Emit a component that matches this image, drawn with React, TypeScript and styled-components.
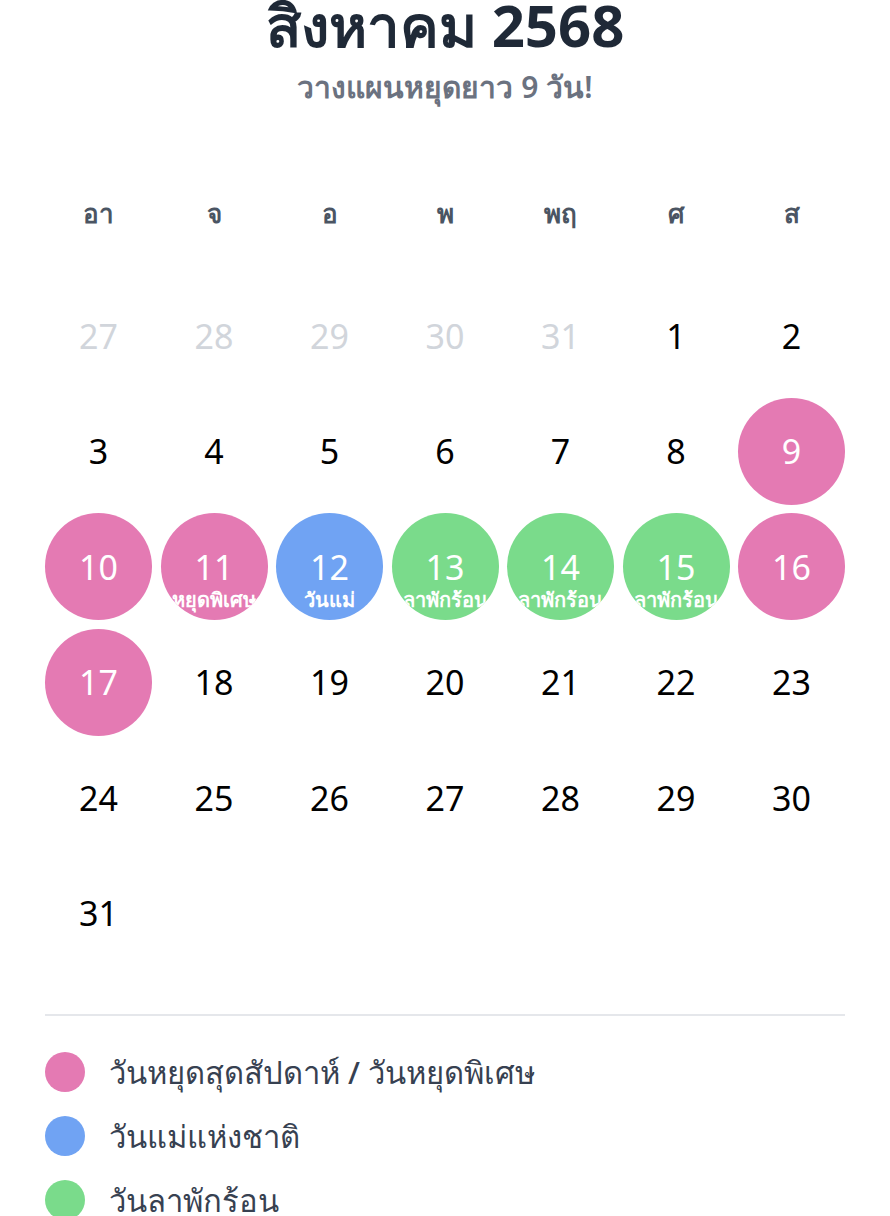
import React from 'react';
import styled, { createGlobalStyle } from 'styled-components';

const GlobalStyle = createGlobalStyle`
    body {
        margin: 0;
        background: #ffffff;
        font-family: 'Noto Sans', 'Open Sans', sans-serif;
    }
`;

const Side = styled.div`
    width: 800px;
    margin: 0 auto;
    padding: 0 0 40px 0;
`;

const Tittel = styled.h1`
    margin: -12px 0 0 0;
    text-align: center;
    font-size: 58px;
    line-height: 74px;
    font-weight: 700;
    color: #1f2937;
`;

const Undertittel = styled.p`
    margin: 6px 0 0 0;
    text-align: center;
    font-size: 30px;
    line-height: 38px;
    font-weight: 600;
    color: #6b7280;
`;

const Rutenett = styled.div`
    display: grid;
    grid-template-columns: repeat(7, 107px);
    column-gap: 8.5px;
    row-gap: 8.5px;
`;

const Ukedager = styled(Rutenett)`
    margin-top: 89px;
    margin-bottom: 51px;
`;

const Ukedag = styled.div`
    text-align: center;
    font-size: 26px;
    line-height: 36px;
    font-weight: 700;
    color: #4b5563;
`;

type Type = 'vanlig' | 'forrige' | 'helg' | 'mor' | 'ferie';

const farger: Record<Type, string> = {
    vanlig: 'transparent',
    forrige: 'transparent',
    helg: '#e47ab3',
    mor: '#70a3f3',
    ferie: '#7adb8b',
};

const Dag = styled.div<{ $type: Type }>`
    position: relative;
    width: 107px;
    height: 107px;
    border-radius: 50%;
    overflow: hidden;
    display: flex;
    align-items: center;
    justify-content: center;
    background: ${(p) => farger[p.$type]};
    color: ${(p) => (p.$type === 'vanlig' ? '#000000' : p.$type === 'forrige' ? '#d1d5db' : '#ffffff')};
    font-size: 34px;
    line-height: 1;
`;

const Merke = styled.span`
    position: absolute;
    left: 50%;
    top: 75px;
    transform: translateX(-50%);
    white-space: nowrap;
    font-size: 20px;
    line-height: 24px;
    font-weight: 700;
    color: #ffffff;
`;

const Skille = styled.hr`
    margin: 47px 0 0 0;
    border: none;
    border-top: 2px solid #e5e7eb;
`;

const Forklaring = styled.ul`
    list-style: none;
    margin: 0;
    padding: 36px 0 0 0;
    display: flex;
    flex-direction: column;
    gap: 24px;
`;

const ForklaringRad = styled.li`
    display: flex;
    align-items: center;
    gap: 24px;
    font-size: 31px;
    line-height: 40px;
    font-weight: 500;
    color: #374151;
`;

const Prikk = styled.span<{ $farge: string }>`
    width: 40px;
    height: 40px;
    border-radius: 50%;
    background: ${(p) => p.$farge};
    flex-shrink: 0;
`;

interface IDag {
    tall: number;
    type: Type;
    merke?: string;
}

const ukedager = ['อา', 'จ', 'อ', 'พ', 'พฤ', 'ศ', 'ส'];

const spesielle: Record<number, { type: Type; merke?: string }> = {
    9: { type: 'helg' },
    10: { type: 'helg' },
    11: { type: 'helg', merke: 'หยุดพิเศษ' },
    12: { type: 'mor', merke: 'วันแม่' },
    13: { type: 'ferie', merke: 'ลาพักร้อน' },
    14: { type: 'ferie', merke: 'ลาพักร้อน' },
    15: { type: 'ferie', merke: 'ลาพักร้อน' },
    16: { type: 'helg' },
    17: { type: 'helg' },
};

const dager: IDag[] = [
    ...[27, 28, 29, 30, 31].map((tall) => ({ tall, type: 'forrige' as Type })),
    ...Array.from({ length: 31 }, (_, i) => {
        const tall = i + 1;
        const s = spesielle[tall];
        return { tall, type: s ? s.type : ('vanlig' as Type), merke: s?.merke };
    }),
];

export default function App() {
    return (
        <>
            <GlobalStyle />
            <Side>
                <Tittel>สิงหาคม 2568</Tittel>
                <Undertittel>วางแผนหยุดยาว 9 วัน!</Undertittel>
                <Ukedager>
                    {ukedager.map((d) => (
                        <Ukedag key={d}>{d}</Ukedag>
                    ))}
                </Ukedager>
                <Rutenett>
                    {dager.map((d, i) => (
                        <Dag key={i} $type={d.type}>
                            {d.tall}
                            {d.merke && <Merke>{d.merke}</Merke>}
                        </Dag>
                    ))}
                </Rutenett>
                <Skille />
                <Forklaring>
                    <ForklaringRad>
                        <Prikk $farge="#e47ab3" />
                        วันหยุดสุดสัปดาห์ / วันหยุดพิเศษ
                    </ForklaringRad>
                    <ForklaringRad>
                        <Prikk $farge="#70a3f3" />
                        วันแม่แห่งชาติ
                    </ForklaringRad>
                    <ForklaringRad>
                        <Prikk $farge="#7adb8b" />
                        วันลาพักร้อน
                    </ForklaringRad>
                </Forklaring>
            </Side>
        </>
    );
}
